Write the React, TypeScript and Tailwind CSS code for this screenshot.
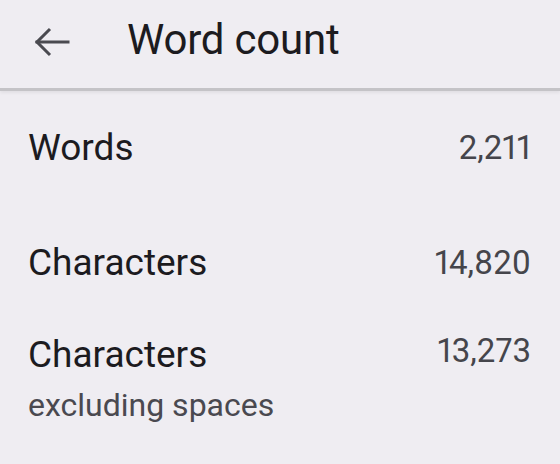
const stats = [
  { label: "Words", value: "2,211" },
  { label: "Characters", value: "14,820" },
];

function BackArrow() {
  return (
    <svg width="37" height="34" viewBox="0 0 37 34" fill="none" stroke="#4a4a50" strokeWidth="3" strokeLinecap="square">
      <path d="M4 17H35" />
      <path d="M17 4L4 17L17 30" strokeLinecap="butt" strokeLinejoin="miter" />
    </svg>
  );
}

export default function App() {
  return (
    <div className="w-[560px] h-[464px] bg-[#efedf2] overflow-hidden" style={{ fontFamily: "Roboto, 'Open Sans', sans-serif" }}>
      {/* Header */}
      <div className="h-[91px] flex items-center border-b-[3px] border-[#c4c3c7] shadow-[0_2px_3px_rgba(0,0,0,0.06)]">
        <div className="w-[127px] pl-[33px] pb-[4px] flex items-center">
          <BackArrow />
        </div>
        <h1 className="text-[42px] leading-none text-[#1c1b1f] tracking-[-0.2px] pb-[8px]">Word count</h1>
      </div>

      {/* Stats */}
      <div className="px-[28px] pt-[35px]">
        {stats.map((s, i) => (
          <div key={i} className={`flex items-start justify-between ${i === 0 ? "h-[115px]" : "h-[92px]"}`}>
            <span className="text-[37px] leading-[44px] text-[#1c1b1f]">{s.label}</span>
            <span className="text-[33px] leading-[44px] text-[#45454b] proportional-nums pr-[1px]">{s.value}</span>
          </div>
        ))}
        <div className="flex items-start justify-between">
          <div className="flex flex-col">
            <span className="text-[37px] leading-[44px] text-[#1c1b1f]">Characters</span>
            <span className="text-[32px] leading-[40px] text-[#4a4950] mt-[8px]">excluding spaces</span>
          </div>
          <span className="text-[33px] leading-[36px] text-[#45454b] proportional-nums pr-[1px]">13,273</span>
        </div>
      </div>
    </div>
  );
}
